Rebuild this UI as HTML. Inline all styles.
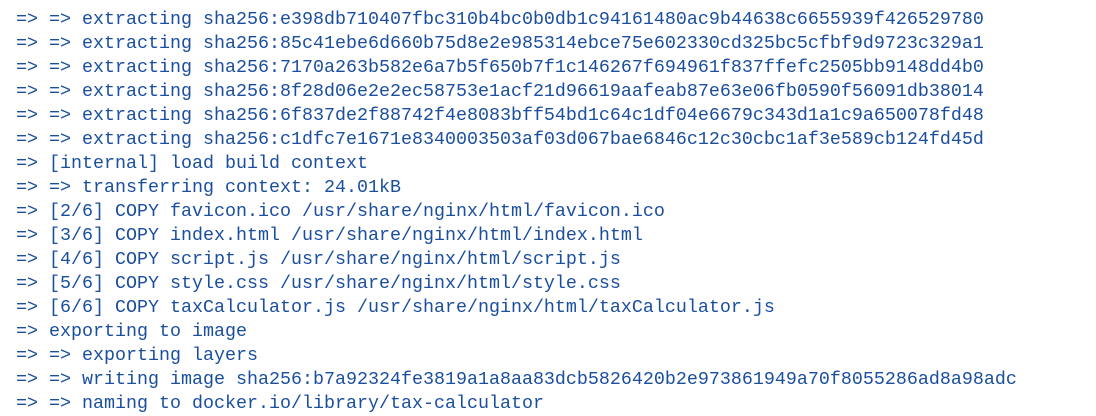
<!DOCTYPE html>
<html><head><style>
html,body{margin:0;padding:0;background:#fff;width:1096px;height:413px;overflow:hidden}
pre{margin:0;position:absolute;left:16px;top:8px;font-family:"Liberation Mono",monospace;font-size:18.33px;line-height:24px;color:#1a4e9e;}
</style></head><body>
<pre>=> => extracting sha256:e398db710407fbc310b4bc0b0db1c94161480ac9b44638c6655939f426529780
=> => extracting sha256:85c41ebe6d660b75d8e2e985314ebce75e602330cd325bc5cfbf9d9723c329a1
=> => extracting sha256:7170a263b582e6a7b5f650b7f1c146267f694961f837ffefc2505bb9148dd4b0
=> => extracting sha256:8f28d06e2e2ec58753e1acf21d96619aafeab87e63e06fb0590f56091db38014
=> => extracting sha256:6f837de2f88742f4e8083bff54bd1c64c1df04e6679c343d1a1c9a650078fd48
=> => extracting sha256:c1dfc7e1671e8340003503af03d067bae6846c12c30cbc1af3e589cb124fd45d
=> [internal] load build context
=> => transferring context: 24.01kB
=> [2/6] COPY favicon.ico /usr/share/nginx/html/favicon.ico
=> [3/6] COPY index.html /usr/share/nginx/html/index.html
=> [4/6] COPY script.js /usr/share/nginx/html/script.js
=> [5/6] COPY style.css /usr/share/nginx/html/style.css
=> [6/6] COPY taxCalculator.js /usr/share/nginx/html/taxCalculator.js
=> exporting to image
=> => exporting layers
=> => writing image sha256:b7a92324fe3819a1a8aa83dcb5826420b2e973861949a70f8055286ad8a98adc
=> => naming to docker.io/library/tax-calculator</pre>
</body></html>
